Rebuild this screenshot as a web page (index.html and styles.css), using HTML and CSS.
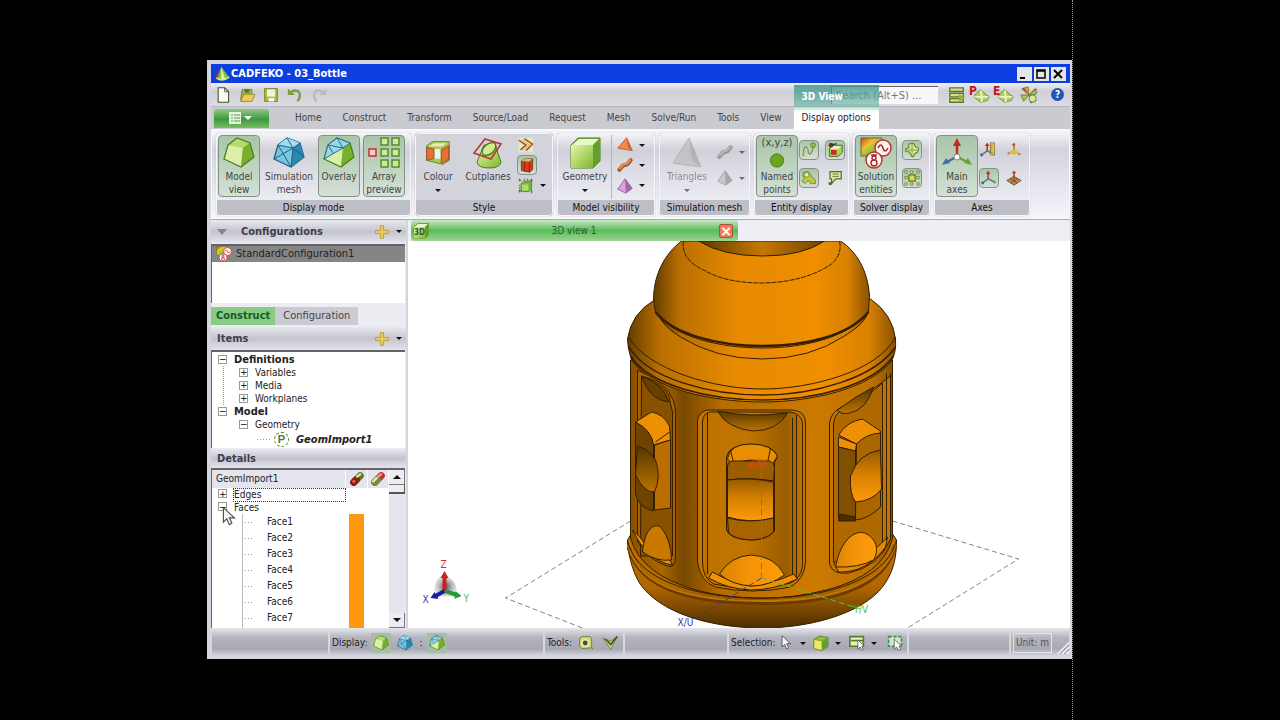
FILE: index.html
```
<!DOCTYPE html>
<html lang="en">
<head>
<meta charset="utf-8">
<title>CADFEKO - 03_Bottle</title>
<link rel="stylesheet" href="styles.css">
</head>
<body>
<svg class="defs" aria-hidden="true">
  <defs>
    <linearGradient id="gGreen" x1="0" y1="0" x2="1" y2="1"><stop offset="0" stop-color="#e4f5a8"/><stop offset="1" stop-color="#7fb82c"/></linearGradient>
    <linearGradient id="gHeat" x1="0" y1="0" x2="1" y2="1"><stop offset="0" stop-color="#d8401c"/><stop offset=".35" stop-color="#eec22e"/><stop offset=".65" stop-color="#7cc442"/><stop offset="1" stop-color="#2a9b9b"/></linearGradient>
  </defs>
  <symbol id="logo" viewBox="0 0 20 20"><path d="M9 1 1 14 6 18Z" fill="#a3304a"/><path d="M9 1 4 16Q12 20 19 14Z" fill="#76c043"/><path d="M9 1 9 17Q12 18 14 16Z" fill="#d9f2b0"/><path d="M3 15Q11 20 19 14" fill="none" stroke="#e9e36a" stroke-width="2"/></symbol>
  <symbol id="solid" viewBox="0 0 32 32"><path d="M5 8 14 1 27 6 31 20 18 30 1 22Z" fill="#8cc63c"/><path d="M5 8 14 1 27 6 20 11Z" fill="#b5dc66"/><path d="M5 8 20 11 18 30 1 22Z" fill="#dcefa8"/><path d="M20 11 27 6 31 20 18 30Z" fill="#76b02c"/><path d="M5 8 14 1 27 6 31 20 18 30 1 22Z" fill="none" stroke="#4b7d25" stroke-width="1.3"/></symbol>
  <symbol id="mesh" viewBox="0 0 32 32"><path d="M5 8 14 1 27 6 31 20 18 30 1 22Z" fill="#7cc6e0" stroke="#1c6080" stroke-width="1.3"/><path d="M5 8 14 1 27 6 20 11Z" fill="#a6dcee"/><path d="M20 11 27 6 31 20 18 30Z" fill="#2b88b0"/><path d="M5 8 20 11 27 6M20 11 18 30M1 22 20 11 31 20M5 8 18 30M14 1 20 11" fill="none" stroke="#1a6384"/></symbol>
  <symbol id="overlay" viewBox="0 0 32 32"><use href="#solid"/><path d="M5 8 14 1 27 6 20 11 1 22Z" fill="#9bd6ea" stroke="#23708e"/><path d="M5 8 20 11M14 1 20 11M5 8 10 16" fill="none" stroke="#23708e"/></symbol>
  <symbol id="array" viewBox="0 0 32 32"><g fill="#cbea9d" stroke="#568d28" stroke-width="1.5"><path d="M13 1h7v7h-7zM24 1h7v7h-7zM13 12h7v7h-7zM24 12h7v7h-7zM13 23h7v7h-7zM24 23h7v7h-7z"/><path d="M1 12h7v7H1z" fill="#f6cfc8" stroke="#c92c2c"/></g></symbol>
  <symbol id="colour" viewBox="0 0 32 32"><path d="M2 7 9 2H30V25L22 30 2 25Z" fill="#a3cd50" stroke="#58772a"/><path d="M5 8 11 4H27L21 8Z" fill="#f3e2bb"/><path d="M2 9 11 11V23L2 25ZM20 12 29 7V24L20 29Z" fill="#e66f35" stroke="#9d4824"/><path d="M12 11h7v12h-7z" fill="#eef0f3"/></symbol>
  <symbol id="cut" viewBox="0 0 32 32"><path d="M12 8 5 25Q6 31 17 31T29 25L23 8Z" fill="url(#gGreen)" stroke="#477c22"/><ellipse cx="17" cy="12" rx="8" ry="5" transform="rotate(-40 17 12)" fill="#d4eb8e" stroke="#477c22" stroke-width="1.5"/><path d="M13 2 29 7 19 22 2 16Z" fill="none" stroke="#bf3434" stroke-width="1.6"/></symbol>
  <symbol id="cube" viewBox="0 0 32 32"><path d="M2 8 9 1H31V24L24 31H2Z" fill="#88be43" stroke="#477b20"/><path d="M3 8 10 2H30L24 8Z" fill="#e4f8c9"/><path d="M2 8H24V31H2Z" fill="url(#gGreen)"/><path d="M24 8 31 1V24L24 31Z" fill="#659e2d"/></symbol>
  <symbol id="selcube" viewBox="0 0 32 32"><path d="M2 9 13 2 30 5V23L18 31 2 27Z" fill="#8fc03c" stroke="#4e7420" stroke-width="1.5"/><path d="M2 9 18 12V31L2 27Z" fill="#ecea62" stroke="#6c7a20"/><path d="M18 12 30 5V23L18 31Z" fill="#659e2d"/></symbol>
  <symbol id="fold" viewBox="0 0 20 20"><path d="M1 1H19V19H1Z" fill="#e1edb7"/><path d="M1 4 10 10 3 16M8 2 18 9 10 17" fill="none" stroke="#b8482f" stroke-width="2"/><path d="M5 3 14 10 6 17" fill="none" stroke="#d3a141"/></symbol>
  <symbol id="redcube" viewBox="0 0 20 20"><path d="M3 5 7 2H17V16L13 19 3 17Z" fill="#d83c20" stroke="#67321b"/><path d="M3 5 7 2H17L13 6Z" fill="#b1c56b"/><path d="M7 5V18M13 6V19" stroke="#731d16"/></symbol>
  <symbol id="box" viewBox="0 0 20 20"><path d="M4 7 7 4H17V14L14 17H4Z" fill="#79b33d" stroke="#477b20"/><path d="M1 3H4M2 1V4M17 1V4M18 3H15M1 16H4M2 14V18M17 15V19M8 1V3M12 1V3M1 9H3M1 12H3" stroke="#47772e" stroke-width="1.4"/><path d="M5 8H13V16H5Z" fill="#b4db6a"/></symbol>
  <symbol id="tri" viewBox="0 0 20 20"><path d="M12 1 1 14 19 17Z" fill="#f28c43" stroke="#a75223"/><path d="M12 1 14 13 19 17Z" fill="#c96429"/></symbol>
  <symbol id="wire" viewBox="0 0 20 20"><path d="M3 16 7 11 13 9 17 4" fill="none" stroke="#a5592c" stroke-width="5" stroke-linecap="round"/><path d="M3 15 7 10 13 8 17 3" fill="none" stroke="#eda068" stroke-width="2"/></symbol>
  <symbol id="tetra" viewBox="0 0 20 20"><path d="M10 1 1 14 11 19 19 13Z" fill="#d9a5d8" stroke="#89558e"/><path d="M10 1 11 19 19 13Z" fill="#a566ab"/></symbol>
  <symbol id="points" viewBox="0 0 32 18"><circle cx="16" cy="9" r="7" fill="#6ba71e" stroke="#477818"/></symbol>
  <symbol id="curve" viewBox="0 0 20 20"><path d="M3 16C3 1 9 6 9 12S15 15 15 4" fill="none" stroke="#6f933c" stroke-width="1.5"/><circle cx="3" cy="16" r="2" fill="#a5b64a"/><circle cx="15" cy="4" r="3" fill="#a5b64a" stroke="#597234"/></symbol>
  <symbol id="port" viewBox="0 0 20 20"><path d="M3 8 8 4H19V13L14 18H3Z" fill="#a8d44d" stroke="#345222"/><path d="M4 9 8 5H18L14 9Z" fill="#e6f5c0"/><path d="M5 10h7v6H5Z" fill="#d12727"/><circle cx="5" cy="4" r="3" fill="#743821"/><path d="M5 4 12 2" stroke="#333" stroke-width="1.5"/></symbol>
  <symbol id="snap" viewBox="0 0 20 20"><path d="M2 4 5 2H15L17 5V16L5 17 2 14Z" fill="#c9db78" stroke="#5c7a2b"/><circle cx="9" cy="10" r="4" fill="#5a4726" stroke="#e8ecb0" stroke-width="2"/><circle cx="18" cy="17" r="1" fill="#7a8c2e"/></symbol>
  <symbol id="shape" viewBox="0 0 20 20"><path d="M3 3Q9 0 12 5L13 9Q19 10 18 17H12L9 13 5 17 1 14 5 9 2 8Z" fill="#c1c744" stroke="#67842a"/><circle cx="7" cy="6" r="3" fill="#e8ecae" stroke="#67842a"/></symbol>
  <symbol id="note" viewBox="0 0 20 20"><path d="M5 2H19V11H12L7 17V11H5Z" fill="#ddecaa" stroke="#526e22" stroke-width="1.5"/><path d="M8 5H16M8 8H16" stroke="#526e22"/><circle cx="5" cy="17" r="2" fill="#526e22"/></symbol>
  <symbol id="solution" viewBox="0 0 32 32"><path d="M1 1H22V19H1Z" fill="url(#gHeat)" stroke="#5c682c"/><circle cx="23" cy="11" r="8" fill="#fff6f2" stroke="#bb3434" stroke-width="1.5"/><path d="M18 11Q21 5 23 11T28 11" fill="none" stroke="#b12121" stroke-width="1.6"/><circle cx="14" cy="23" r="8" fill="#fff6f2" stroke="#bb3434" stroke-width="1.5"/><path d="M11 18H17M12 21a2 2 0 1 0 4 0 2 2 0 1 0-4 0M11 26a3 3 0 1 0 6 0 3 3 0 1 0-6 0" fill="none" stroke="#b12121" stroke-width="1.4"/></symbol>
  <symbol id="clover" viewBox="0 0 20 20"><path d="M6 3Q10 0 13 3L14 6Q19 6 18 10T14 14L12 18Q9 19 8 15L6 12Q1 13 2 9L6 7Z" fill="#dae9a2" stroke="#6b8f2e" stroke-width="1.5"/><path d="M2 10H17M10 2V18" stroke="#6b8f2e"/></symbol>
  <symbol id="gridic" viewBox="0 0 20 20"><path d="M6 6h8v8H6z" fill="#d8d558" stroke="#5f772a" stroke-width="1.5"/><path d="M1 1h3v3H1zM8 1h3v3H8zM16 1h3v3h-3zM1 8h3v3H1zM16 8h3v3h-3zM1 16h3v3H1zM8 16h3v3H8zM16 16h3v3h-3z" fill="#edf5b7" stroke="#5f772a"/></symbol>
  <symbol id="axes" viewBox="0 0 32 32"><path d="M16 20V8" stroke="#c92525" stroke-width="2.5"/><path d="M12 9 16 1 20 9Z" fill="#c92525"/><path d="M15 20 6 25" stroke="#446da9" stroke-width="2.5"/><path d="M1 28 5 21 9 26Z" fill="#446da9"/><path d="M17 20 26 25" stroke="#68a33a" stroke-width="2.5"/><path d="M31 28 27 21 23 26Z" fill="#68a33a"/><circle cx="16" cy="20" r="3" fill="#fff" stroke="#888"/></symbol>
  <symbol id="miniaxes" viewBox="0 0 20 20"><path d="M9 12V2" stroke="#c42f2b" stroke-width="2"/><path d="M9 11 2 16M9 11 17 15" stroke="#547a9d" stroke-width="2"/><path d="M6 5 9 1 12 5Z" fill="#c42f2b"/><circle cx="2" cy="16" r="2" fill="#456ea4"/><circle cx="17" cy="15" r="2" fill="#79a546"/></symbol>
  <symbol id="ruler" viewBox="0 0 20 20"><use href="#miniaxes"/><path d="M13 1h5v15h-5z" fill="#e5d06a" stroke="#826e25"/><path d="M13 4h3M13 7h3M13 10h3M13 13h3" stroke="#826e25"/></symbol>
  <symbol id="origin" viewBox="0 0 20 20"><path d="M10 12V2M10 11 2 15M10 11 18 16" stroke="#b87b26" stroke-width="2"/><path d="M4 14 10 9 17 14 10 16Z" fill="#e0bd44"/><path d="M7 4 10 1 12 4Z" fill="#b63b29"/></symbol>
  <symbol id="plane" viewBox="0 0 20 20"><path d="M1 13 10 8 19 13 10 19Z" fill="#b99047" stroke="#634522"/><path d="M5 11 14 16M15 11 6 16" stroke="#634522"/><path d="M10 12V2" stroke="#b63b29" stroke-width="2"/><path d="M7 4 10 1 13 4Z" fill="#b63b29"/></symbol>
  <symbol id="meshTri" viewBox="0 0 32 32"><path d="M18 1 2 26 30 30Z" fill="#b5b6ba" stroke="#929397"/><path d="M18 1 21 24 30 30Z" fill="#999a9f"/></symbol>
  <symbol id="plus" viewBox="0 0 20 20"><path d="M8 2h4v6h6v4h-6v6H8v-6H2V8h6Z" fill="#e9ca5d" stroke="#b89533"/></symbol>
  <symbol id="cursor" viewBox="0 0 20 24"><path d="M4 1V18L8 14 11 21 14 19 11 13H17Z" fill="#f7f7f7" stroke="#4b4b4b" stroke-width="1.3"/></symbol>
  <symbol id="new" viewBox="0 0 20 20"><path d="M4 1H12L17 6V19H4Z" fill="#fbfcf8" stroke="#3e502c" stroke-width="1.3"/><path d="M12 1V6H17" fill="none" stroke="#3e502c"/></symbol>
  <symbol id="open" viewBox="0 0 20 20"><path d="M4 3H16V16H2Z" fill="#99b94a" stroke="#67781e"/><path d="M2 18 6 9H20L16 18Z" fill="#efcb55" stroke="#8e7a2f"/><path d="M7 3H13V7H7Z" fill="#4c7a2d"/></symbol>
  <symbol id="save" viewBox="0 0 20 20"><path d="M2 2H18V18H2Z" fill="#a9be46" stroke="#64781f"/><path d="M5 3H15V12H5Z" fill="#f0f3dd"/><path d="M7 14H14V18H7Z" fill="#fff"/></symbol>
  <symbol id="undo" viewBox="0 0 20 20"><path d="M5 6C16 1 19 10 13 18" fill="none" stroke="currentColor" stroke-width="3"/><path d="M1 2V10H10Z" fill="currentColor"/></symbol>
  <symbol id="runmesh" viewBox="0 0 20 20"><path d="M9 4 19 12 17 16 10 18 3 13 3 10Z" fill="#a9d160" stroke="#6a8c34"/><path d="M3 12H18M10 5 11 18" stroke="#eaf6cc" stroke-width="2"/></symbol>
  <symbol id="fan" viewBox="0 0 20 20"><path d="M10 10 2 3 9 1ZM10 10 18 3 18 9ZM10 10 1 10 4 17ZM10 10 12 19 18 16Z" fill="#a7c64c" stroke="#657d2e"/><path d="M10 10 2 3 5 2ZM10 10 18 3 16 3Z" fill="#c4452e"/><circle cx="14" cy="14" r="4" fill="#dae9a2" stroke="#657d2e"/></symbol>
  <symbol id="machine" viewBox="0 0 20 20"><path d="M2 2H17V6H2ZM2 8H17V12H2ZM2 14H17V18H2Z" fill="#d8dd94" stroke="#5b7727" stroke-width="1.5"/><path d="M12 9 19 13 12 18Z" fill="#8cb539"/></symbol>
  <symbol id="pillA" viewBox="0 0 20 20"><path d="M6 14 14 6" stroke="#5d7a26" stroke-width="9" stroke-linecap="round"/><path d="M6 14 9 11" stroke="#8e1d18" stroke-width="9" stroke-linecap="round"/><path d="M10 7 14 4" stroke="#d5e59c" stroke-width="3" stroke-linecap="round"/><circle cx="6" cy="13" r="2" fill="#dd5b4c"/></symbol>
  <symbol id="pillB" viewBox="0 0 20 20"><path d="M6 14 14 6" stroke="#b8342e" stroke-width="9" stroke-linecap="round"/><path d="M6 14 9 11" stroke="#7a8d3c" stroke-width="9" stroke-linecap="round"/><path d="M10 7 14 4" stroke="#f3938a" stroke-width="3" stroke-linecap="round"/><path d="M4 13 8 9" stroke="#e4eab9" stroke-width="3" stroke-linecap="round"/></symbol>
  <symbol id="selwin" viewBox="0 0 20 20"><path d="M1 2H18V14H1Z" fill="#e6efbc" stroke="#557d28" stroke-width="2"/><path d="M2 7H18" stroke="#557d28" stroke-width="2"/><path d="M11 6V18L14 15 16 19 18 18 16 14H19Z" fill="#fff" stroke="#555"/></symbol>
  <symbol id="selbox" viewBox="0 0 20 20"><path d="M2 2H18V14H2Z" fill="#cfe8cc" stroke="#3c8a52" stroke-width="2" stroke-dasharray="4 2"/><path d="M9 5V18L12 15 14 19 17 18 15 14H18Z" fill="#fff" stroke="#555"/></symbol>
</svg>
<main class="desktop">
<div class="app">
  <header class="titlebar">
    <svg class="i16"><use href="#logo"/></svg><h1>CADFEKO - 03_Bottle</h1>
    <div class="wins"><button aria-label="Minimise"><svg viewBox="0 0 12 12"><path d="M2 10H7" stroke="#000" stroke-width="2"/></svg></button><button aria-label="Maximise"><svg viewBox="0 0 12 12"><path d="M2 2H10V10H2ZM2 3H10" fill="none" stroke="#000" stroke-width="1.5"/></svg></button><button aria-label="Close"><svg viewBox="0 0 12 12"><path d="M2 2 10 10M10 2 2 10" stroke="#000" stroke-width="2"/></svg></button></div>
  </header>
  <div class="quick">
    <button aria-label="New"><svg class="i16"><use href="#new"/></svg></button><button aria-label="Open"><svg class="i16"><use href="#open"/></svg></button><button aria-label="Save"><svg class="i16"><use href="#save"/></svg></button><button class="undo" aria-label="Undo"><svg class="i16"><use href="#undo"/></svg></button><button class="redo" aria-label="Redo"><svg class="i16"><use href="#undo"/></svg></button>
    <input class="search" type="search" aria-label="Search" placeholder="Search (Alt+S) ...">
    <div class="launch"><button aria-label="Components"><svg class="i18"><use href="#machine"/></svg></button><button class="letter" aria-label="Run preprocessor"><svg class="i18"><use href="#runmesh"/></svg><b>P</b></button><button class="letter" aria-label="Run editor"><svg class="i18"><use href="#runmesh"/></svg><b>E</b></button><button aria-label="Run solver"><svg class="i18"><use href="#fan"/></svg></button><button class="help" aria-label="Help">?</button></div>
  </div>
  <nav class="tabs">
    <button class="filemenu" aria-label="File"><svg viewBox="0 0 28 14"><path d="M1 1H13V13H1Z" fill="#e9f5df"/><path d="M3 4H5M6 4H12M3 7H5M6 7H12M3 10H5M6 10H12" stroke="#4c9a46"/><path d="M16 5H24L20 9Z" fill="#fff"/></svg></button>
    <button>Home</button><button>Construct</button><button>Transform</button><button>Source/Load</button><button>Request</button><button>Mesh</button><button>Solve/Run</button><button>Tools</button><button>View</button>
    <div class="context"><span>3D View</span><button class="chosen">Display options</button></div>
  </nav>
  <div class="ribbon">
    <section class="group g-display"><div class="cmds"><button class="big on"><svg class="i32"><use href="#solid"/></svg>Model<br>view</button><button class="big wide"><svg class="i32"><use href="#mesh"/></svg>Simulation<br>mesh</button><button class="big on"><svg class="i32"><use href="#overlay"/></svg>Overlay</button><button class="big on"><svg class="i32"><use href="#array"/></svg>Array<br>preview</button></div><h2>Display mode</h2></section>
    <section class="group g-style"><div class="cmds"><button class="big"><svg class="i26"><use href="#colour"/></svg>Colour<i class="arr"></i></button><button class="big wide"><svg class="i32"><use href="#cut"/></svg>Cutplanes</button><div class="small one"><button aria-label="Fold"><svg class="i16"><use href="#fold"/></svg></button><button class="on" aria-label="Opaque"><svg class="i16"><use href="#redcube"/></svg></button><button class="drop" aria-label="Bounds"><svg class="i16"><use href="#box"/></svg><i class="arr"></i></button></div></div><h2>Style</h2></section>
    <section class="group g-model"><div class="cmds"><button class="big wide"><svg class="i32"><use href="#cube"/></svg>Geometry<i class="arr"></i></button><div class="small one sep"><button class="drop" aria-label="Faces"><svg class="i16"><use href="#tri"/></svg><i class="arr"></i></button><button class="drop" aria-label="Wires"><svg class="i16"><use href="#wire"/></svg><i class="arr"></i></button><button class="drop" aria-label="Regions"><svg class="i16"><use href="#tetra"/></svg><i class="arr"></i></button></div></div><h2>Model visibility</h2></section>
    <section class="group g-sim"><div class="cmds dim"><button class="big wide" disabled><svg class="i32"><use href="#meshTri"/></svg>Triangles<i class="arr"></i></button><div class="small one two-high"><button class="drop" disabled aria-label="Segments"><svg class="i16"><use href="#wire"/></svg><i class="arr"></i></button><button class="drop" disabled aria-label="Tetrahedra"><svg class="i16"><use href="#tetra"/></svg><i class="arr"></i></button></div></div><h2>Simulation mesh</h2></section>
    <section class="group g-entity"><div class="cmds"><button class="big on"><span class="xyz">(x,y,z)</span><svg class="dot"><use href="#points"/></svg>Named<br>points</button><div class="small grid"><button class="on" aria-label="Curves"><svg class="i16"><use href="#curve"/></svg></button><button class="on" aria-label="Ports"><svg class="i16"><use href="#port"/></svg></button><button class="on" aria-label="Surfaces"><svg class="i16"><use href="#shape"/></svg></button><button aria-label="Notes"><svg class="i16"><use href="#note"/></svg></button></div></div><h2>Entity display</h2></section>
    <section class="group g-solver"><div class="cmds"><button class="big on"><svg class="i32"><use href="#solution"/></svg>Solution<br>entities</button><div class="small grid col"><button class="on" aria-label="Symmetry"><svg class="i16"><use href="#clover"/></svg></button><button class="on" aria-label="Arrays"><svg class="i16"><use href="#gridic"/></svg></button></div></div><h2>Solver display</h2></section>
    <section class="group g-axes"><div class="cmds"><button class="big on"><svg class="i32"><use href="#axes"/></svg>Main<br>axes</button><div class="small grid"><button aria-label="Tick marks"><svg class="i16"><use href="#ruler"/></svg></button><button aria-label="Origin"><svg class="i16"><use href="#origin"/></svg></button><button class="on" aria-label="Mini axes"><svg class="i16"><use href="#miniaxes"/></svg></button><button aria-label="Workplane"><svg class="i16"><use href="#plane"/></svg></button></div></div><h2>Axes</h2></section>
  </div>
  <div class="work">
    <aside>
      <div class="head conf"><i class="fold"></i><h2>Configurations</h2><button class="drop" aria-label="Add configuration"><svg class="i16"><use href="#plus"/></svg><i class="arr"></i></button></div>
      <ul class="configs"><li><svg class="i16"><use href="#solution"/></svg>StandardConfiguration1</li></ul>
      <div class="sidetabs"><button class="active">Construct</button><button>Configuration</button></div>
      <div class="head"><h2>Items</h2><button class="drop" aria-label="Add item"><svg class="i16"><use href="#plus"/></svg><i class="arr"></i></button></div>
      <ul class="tree">
        <li><button class="tw" aria-label="Collapse">−</button><b>Definitions</b>
          <ul><li><button class="tw" aria-label="Expand">+</button>Variables</li><li><button class="tw" aria-label="Expand">+</button>Media</li><li><button class="tw" aria-label="Expand">+</button>Workplanes</li></ul></li>
        <li><button class="tw" aria-label="Collapse">−</button><b>Model</b>
          <ul class="last"><li><button class="tw" aria-label="Collapse">−</button>Geometry<div class="leaf"><span class="pbadge">P</span><b><em>GeomImport1</em></b></div></li></ul></li>
      </ul>
      <div class="head details"><h2>Details</h2></div>
      <div class="detailbox">
        <table>
          <thead><tr><th>GeomImport1</th><th><svg class="i16"><use href="#pillA"/></svg></th><th><svg class="i16"><use href="#pillB"/></svg></th></tr></thead>
          <tbody>
            <tr class="top"><td><button class="tw" aria-label="Expand">+</button><span class="focus">Edges</span></td><td></td><td></td></tr>
            <tr class="top"><td><button class="tw" aria-label="Collapse">−</button><span>Faces</span></td><td></td><td></td></tr>
            <tr><td>Face1</td><td class="swatch"></td><td></td></tr><tr><td>Face2</td><td class="swatch"></td><td></td></tr><tr><td>Face3</td><td class="swatch"></td><td></td></tr><tr><td>Face4</td><td class="swatch"></td><td></td></tr><tr><td>Face5</td><td class="swatch"></td><td></td></tr><tr><td>Face6</td><td class="swatch"></td><td></td></tr><tr><td>Face7</td><td class="swatch"></td><td></td></tr><tr><td>Face8</td><td class="swatch"></td><td></td></tr>
          </tbody>
        </table>
        <div class="scroll"><button aria-label="Scroll up"><i class="arr up"></i></button><span class="thumb"></span><button class="dn" aria-label="Scroll down"><i class="arr"></i></button></div>
        <svg class="pointer"><use href="#cursor"/></svg>
      </div>
    </aside>
    <section class="view">
      <div class="viewtabs"><div class="viewtab"><span class="cubeicon"><svg class="i16"><use href="#cube"/></svg><b>3D</b></span><span class="name">3D view 1</span><button aria-label="Close view">×</button></div></div>
      <svg class="scene" viewBox="409 241 661 387" role="img" aria-label="3D model of a bottle">
        <defs>
          <linearGradient id="body"><stop offset="0" stop-color="#8a5200"/><stop offset=".12" stop-color="#a86500"/><stop offset=".2" stop-color="#784800"/><stop offset=".35" stop-color="#b66c00"/><stop offset=".7" stop-color="#cc7a00"/><stop offset=".92" stop-color="#bd7100"/><stop offset="1" stop-color="#895100"/></linearGradient>
          <linearGradient id="dome"><stop offset="0" stop-color="#633d00"/><stop offset=".12" stop-color="#b96f00"/><stop offset=".4" stop-color="#e88b00"/><stop offset=".75" stop-color="#ef8e00"/><stop offset=".9" stop-color="#d98100"/><stop offset="1" stop-color="#8a5200"/></linearGradient>
          <linearGradient id="low" x1="0" y1="0" x2="0" y2="1"><stop offset="0" stop-color="#c47500"/><stop offset=".6" stop-color="#b06700"/><stop offset="1" stop-color="#4c2d00"/></linearGradient>
          <linearGradient id="shade" x1="0" y1="0" x2="0" y2="1"><stop offset="0" stop-color="#533600"/><stop offset="1" stop-color="#bd7300"/></linearGradient>
          <linearGradient id="neck"><stop offset="0" stop-color="#5a3800"/><stop offset=".5" stop-color="#c77700"/><stop offset="1" stop-color="#6e4400"/></linearGradient>
          <linearGradient id="cup" x1="0" y1="0" x2="0" y2="1"><stop offset="0" stop-color="#955900"/><stop offset=".45" stop-color="#d48000"/><stop offset="1" stop-color="#ff9a0c"/></linearGradient>
          <linearGradient id="recess"><stop offset="0" stop-color="#bd7200"/><stop offset=".45" stop-color="#c17400"/><stop offset=".84" stop-color="#9b5c00"/><stop offset="1" stop-color="#c27500"/></linearGradient>
          <linearGradient id="ball"><stop offset="0" stop-color="#dc8300"/><stop offset=".45" stop-color="#f39407"/><stop offset="1" stop-color="#ff9b0a"/></linearGradient>
          <radialGradient id="fog"><stop offset="0" stop-color="#555"/><stop offset="1" stop-color="#d3d3d3" stop-opacity=".6"/></radialGradient>
        </defs>
        <path d="M631 521 506 598 583 628M893 521 1019 559 908 628" fill="none" stroke="#848484" stroke-dasharray="5 3"/>
        <g stroke="#341e00" stroke-width="1" stroke-linejoin="round">
          <path d="M628 540C628 550 632 570 640 583C660 613 711 628 763 628S870 611 887 581C895 568 897 555 897 540L887 525H637Z" fill="url(#low)"/>
          <path d="M631 360V538Q641 575 700 591Q763 606 827 590Q884 575 893 538V360Z" fill="url(#body)"/>
          <path d="M629 547C641 594 705 603 763 603S884 592 896 545" fill="none" stroke="#6b3b00" stroke-width="4"/>
          <path d="M629 546C641 593 705 601 763 601S884 590 896 544" fill="none" stroke="#c27600" stroke-width="2"/>
          <path d="M628 541C637 580 695 598 763 598S888 578 897 540" fill="none"/>
          <path d="M655 300Q632 313 628 339Q628 348 632 360C652 389 713 402 763 402S871 388 892 361Q897 352 896 339Q893 314 871 299Z" fill="url(#dome)"/>
          <path d="M629 346C647 379 711 395 763 395S875 378 896 347M631 356C650 386 711 400 763 400S873 386 894 356" fill="none" stroke-width="1.5"/>
          <path d="M629 337C649 370 714 389 763 389S879 371 896 337" fill="none"/>
          <path d="M657 310Q660 324 681 337Q716 359 763 359T845 336Q867 323 869 310" fill="url(#dome)"/>
          <path d="M682 241C665 254 654 275 654 300L656 312C674 337 720 348 763 348S849 337 869 312L870 295C868 271 858 252 841 241Z" fill="url(#dome)"/>
          <path d="M656 312C674 335 720 346 763 346S849 336 869 312" fill="none" stroke-width="2.5"/>
          <path d="M699 241Q723 256 763 256T825 241Z" fill="url(#neck)"/>
          <path d="M684 241Q681 260 706 271Q727 283 763 283Q806 282 832 264Q843 254 840 241" fill="none" stroke-dasharray="5 1"/>
          <path d="M638 370C653 377 667 385 672 397Q677 405 676 422V555Q676 569 668 566C653 561 644 552 638 541Z" fill="#a66300"/>
          <path d="M642 376Q660 380 669 395L673 412V556H641Z" fill="#885100"/>
          <path d="M642 376Q650 400 669 402 664 384 642 376Z" fill="#674000"/>
          <path d="M636 422 652 412Q664 414 670 426L671 440 654 445Q652 432 636 422Z" fill="#ed9003"/>
          <path d="M655 445 671 440V508L655 510Z" fill="#ba6e00"/>
          <path d="M656 442 670 432" fill="none"/>
          <path d="M636 422Q652 430 654 445V511Q638 507 636 493Z" fill="#6f4300"/>
          <path d="M638 446Q649 449 656 460Q662 477 655 492Q645 493 636 475Z" fill="url(#shade)"/>
          <path d="M633 530Q648 561 673 565L669 558Q652 556 641 538Z" fill="#f09409"/>
          <path d="M643 552C645 528 655 523 661 527C669 536 672 550 672 560Q657 562 643 552Z" fill="#c77900"/>
          <path d="M698 562V421Q699 411 709 410H793Q806 411 806 423V562Q805 579 791 587Q754 595 716 587Q701 582 698 562Z" fill="#c37500"/>
          <path d="M703 562V421Q704 413 711 412H791Q802 414 803 423V565Q802 578 791 583Q753 593 714 584Q703 578 703 562Z" fill="url(#recess)"/>
          <path d="M708 413V574M793 418V577M797 415V580" fill="none"/>
          <path d="M718 411Q750 418 788 413Q778 431 753 431Q727 428 718 411Z" fill="url(#shade)"/>
          <path d="M727 457Q729 445 751 444Q774 445 778 456L775 463V531Q768 540 751 540Q730 539 727 530Z" fill="#9e5e00"/>
          <path d="M728 459Q730 444 751 444T778 456L773 464 751 460 732 463Z" fill="#e98e00"/>
          <path d="M731 450 734 463M771 448 768 463" fill="none"/>
          <path d="M728 466Q729 461 735 461H770Q775 463 775 468L774 481Q751 477 728 480Z" fill="#9b5d00"/>
          <path d="M728 480Q751 477 774 482V518Q751 524 728 517Z" fill="url(#cup)"/>
          <path d="M728 518Q751 524 774 518V532Q766 540 751 540Q733 539 729 532Z" fill="#a66300"/>
          <path d="M709 578 713 572Q732 583 751 586 772 584 794 574L798 579Q775 590 751 590 728 589 709 578Z" fill="#ed9207"/>
          <path d="M720 574Q731 556 752 555Q775 556 785 575Q770 586 752 586Q732 585 720 574Z" fill="url(#ball)"/>
          <path d="M887 379Q864 397 844 406Q831 412 830 423V564Q833 575 849 573Q879 567 891 539V376Z" fill="#c27400"/>
          <path d="M883 383Q863 401 844 409Q835 413 834 424V560Q836 570 849 570Q872 564 883 545Z" fill="#b06900"/>
          <path d="M838 410Q855 397 874 387Q867 410 850 413 841 415 838 410Z" fill="url(#shade)"/>
          <path d="M839 435Q848 421 863 419L881 431 880 435Q864 438 857 444Z" fill="#ed9003"/>
          <path d="M839 437 857 444 856 451 839 447Z" fill="#ed9003"/>
          <path d="M839 447 856 451V520L839 518Z" fill="#805000"/>
          <path d="M857 444Q866 434 881 433V507Q869 519 856 520Z" fill="#aa6600"/>
          <path d="M881 450Q859 453 851 476Q850 494 856 502Q873 501 882 489Z" fill="url(#cup)"/>
          <path d="M840 514 856 517V521H839Z" fill="#4d2e00"/>
          <path d="M834 562Q863 565 888 537L886 547Q867 573 839 572Z" fill="#e58a00"/>
          <path d="M836 567C841 540 855 530 865 533C877 538 880 550 874 560Q859 568 836 567Z" fill="url(#ball)"/>
          <path d="M887 373V540M891 373V530" fill="none"/>
        </g>
        <g fill="none" stroke-dasharray="6 3"><path d="M762 464V578" stroke="#ef4718"/><path d="M762 578 697 618" stroke="#513078"/><path d="M762 578 861 609" stroke="#52c43b"/></g>
        <g class="axistext"><text x="749" y="467" fill="#e84419">Z/W</text><text x="678" y="626" fill="#3939a2">X/U</text><text x="854" y="613" fill="#45c538">Y/V</text></g>
        <path d="M436 597Q432 576 445 576Q459 579 457 596Z" fill="url(#fog)"/>
        <g stroke-width="4"><path d="M445 591V576" stroke="#c72222"/><path d="M445 591 436 596" stroke="#1c1ca0"/><path d="M446 591 457 595" stroke="#289a33"/></g>
        <path d="M441 578 445 571 449 578Z" fill="#c72222"/><path d="M431 598 435 592 439 599Z" fill="#1c1ca0"/><path d="M462 596 456 591 455 599Z" fill="#289a33"/>
        <g class="axistext"><text x="441" y="568" fill="#c33">Z</text><text x="423" y="603" fill="#33a">X</text><text x="464" y="602" fill="#5b5">Y</text></g>
      </svg>
    </section>
  </div>
  <footer class="status">
    <div class="s-blank"></div>
    <div class="s-display"><span>Display:</span><button class="on" aria-label="Model"><svg class="i16"><use href="#solid"/></svg></button><button aria-label="Mesh"><svg class="i16"><use href="#mesh"/></svg></button><span>:</span><button class="on" aria-label="Overlay"><svg class="i16"><use href="#overlay"/></svg></button></div>
    <div class="s-tools"><span>Tools:</span><button aria-label="Snapshot"><svg class="i16"><use href="#snap"/></svg></button><button aria-label="Measure"><svg class="i16" viewBox="0 0 20 20"><path d="M1 4 11 8 19 2 11 18Z" fill="#cad878" stroke="#617638"/><path d="M4 5 11 12 19 2" fill="none" stroke="#465426" stroke-width="2"/></svg></button></div>
    <div class="s-gap"></div>
    <div class="s-select"><span>Selection:</span><button class="drop" aria-label="Selection tool"><svg class="i16"><use href="#cursor"/></svg><i class="arr"></i></button><button class="drop" aria-label="Selection type"><svg class="i16"><use href="#selcube"/></svg><i class="arr"></i></button><button class="drop" aria-label="Selection method"><svg class="i16"><use href="#selwin"/></svg><i class="arr"></i></button><button aria-label="Box select"><svg class="i16"><use href="#selbox"/></svg></button></div>
    <div class="s-fill"></div>
    <div class="s-unit"><button>Unit: m</button><svg class="grip" viewBox="0 0 16 16"><path d="M2 15 15 2M7 15 15 7M12 15 15 12" stroke="#f4f4f6" stroke-width="2"/><path d="M4 15 15 4M9 15 15 9" stroke="#888"/></svg></div>
  </footer>
</div>
</main>
</body>
</html>
```
FILE: styles.css
```
* { box-sizing: border-box; }
body { margin: 0; background: #000; color: #222; font: 10px/12px "DejaVu Sans Condensed", "DejaVu Sans", sans-serif; }
h1, h2, ul { margin: 0; padding: 0; font-size: inherit; }
ul { list-style: none; }
button { font: inherit; color: inherit; border: 0; background: none; padding: 0; }
svg { display: block; flex: none; }
.defs { position: absolute; width: 0; height: 0; }
.i16 { width: 16px; height: 16px; }
.i18 { width: 18px; height: 18px; }
.i26 { width: 26px; height: 32px; }
.i32 { width: 32px; height: 32px; }
.arr { display: block; flex: none; width: 0; height: 0; border: 3px solid transparent; border-top-color: #111; border-bottom: 0; }
.arr.up { border-top: 0; border-bottom: 3px solid #111; }

.desktop { height: 100vh; padding: 60px 0 61px 207px; margin-right: 207px; border-right: 1px dotted #b27bc4; }
.app { height: 100%; display: flex; flex-direction: column; border: 4px solid #d5d5de; border-right-width: 2px; border-bottom-width: 3px; background: #dedee6; }

.titlebar { display: flex; align-items: center; height: 19px; padding: 0 4px 0 3px; background: #0c3fe2; color: #fff; flex: none; }
.titlebar h1 { font-size: 11px; margin-left: 1px; flex: 1; }
.wins { display: flex; gap: 2px; }
.wins button { width: 15px; height: 14px; padding: 1px; background: #e5e5e5; }
.wins svg { width: 12px; height: 12px; }

.quick { display: flex; align-items: center; gap: 8px; height: 24px; padding: 0 6px 0 4px; background: linear-gradient(#f0f0f6, #cfcfd5 35%, #dcdce2); border-bottom: 1px solid #b9b9c1; flex: none; }
.undo { color: #7e9e44; }
.redo { color: #b9bbc1; }
.redo svg { transform: scaleX(-1); }
.search { width: 107px; height: 18px; margin-left: auto; border: 1px solid #666; border-width: 1px 0 0 1px; background: #f8f8fb; font: inherit; font-size: 11px; padding: 0 4px; }
.search::placeholder { color: #777; opacity: 1; }
.launch { display: flex; align-items: center; gap: 6px; margin-left: 2px; }
.letter { position: relative; }
.letter b { position: absolute; left: -3px; top: -1px; color: #c01823; font-size: 12px; }
.help { width: 13px; height: 13px; margin-left: 7px; border-radius: 50%; background: #2954b5; color: #fff; font-weight: bold; }

.tabs { display: flex; align-items: center; gap: 1px; height: 22px; padding-left: 3px; background: #cacad1; flex: none; color: #444; }
.tabs > button { padding: 0 10px; }
.filemenu { width: 55px; height: 19px; margin-right: 15px; border-radius: 3px 3px 0 0; background: linear-gradient(#8fc884, #3d993d 55%, #79bd67); }
.filemenu svg { width: 28px; height: 14px; margin: 0 auto; }
.context { position: relative; align-self: stretch; margin-left: 1px; }
.context span { position: absolute; left: 0; right: 0; bottom: 100%; height: 22px; padding: 6px 8px; background: linear-gradient(#3c948acc, #6db3a499); color: #fff; font-weight: bold; }
.chosen { height: 22px; padding: 0 8px; background: linear-gradient(#b8dccb, #fff 5px); color: #222; }

.ribbon { display: flex; gap: 4px; padding: 3px 4px; height: 90px; flex: none; background: linear-gradient(#f7f7fb, #d4d4dd 22%, #e4e4ed 60%, #f5f5fa); border: 1px solid #fafafe; }
.group { display: flex; flex-direction: column; flex: none; height: 83px; border: 1px solid #f5f5fa; border-radius: 4px; overflow: hidden; background: linear-gradient(#f2f2f6, #d0d0d8 20%, #dfdfe7 50%, #f2f2f8); box-shadow: 0 0 1px #999; }
.group h2 { height: 15px; line-height: 15px; background: #bebec7; text-align: center; font-weight: normal; color: #111; flex: none; }
.g-display { width: 195px; }
.g-style { width: 138px; background: #d3d3dc; }
.g-model { width: 98px; }
.g-sim { width: 91px; }
.g-entity { width: 95px; }
.g-solver { width: 77px; }
.g-axes { width: 96px; }
.cmds { display: flex; flex: 1; gap: 3px; padding: 1px; min-height: 0; }
.big { display: flex; flex-direction: column; align-items: center; justify-content: flex-start; min-width: 42px; height: 62px; border: 1px solid transparent; border-radius: 4px; color: #444; line-height: 13px; }
.big svg { margin: 1px 0; }
.big.wide { min-width: 52px; }
.big .arr { margin-top: 6px; }
.on { border: 1px solid #829486; border-radius: 4px; background: linear-gradient(#a9c5aa, #c1d6c2 60%, #d5dfd8); }
.xyz { height: 15px; font-size: 11px; }
.big .dot { width: 32px; height: 17px; }
.small { display: flex; flex-direction: column; flex: 1; justify-content: space-around; padding-bottom: 3px; }
.small button { width: 20px; height: 20px; padding: 1px; }
.small .drop, .drop { display: flex; align-items: center; gap: 6px; width: 34px; }
.sep { border-left: 1px solid #b5b5bd; padding-left: 4px; }
.two-high { padding: 4px 0 8px; }
.grid { display: grid; grid-template-columns: 22px 22px; place-content: center; gap: 8px 4px; padding-bottom: 6px; }
.grid.col { grid-template-columns: 22px; }
.grid .on { padding: 0 1px; }
.dim { filter: grayscale(1); opacity: .55; }
.g-entity .cmds, .g-solver .cmds, .g-axes .cmds, .g-model .cmds { gap: 0; }

.work { display: flex; flex: 1; min-height: 0; border-top: 1px solid #aaaab2; }
aside { display: flex; flex-direction: column; flex: none; width: 197px; border-right: 2px solid #d4d4dc; background: #ececf3; }
.head { display: flex; align-items: center; height: 23px; padding: 0 0 0 6px; flex: none; background: linear-gradient(#e8e8ef, #c4c4ce 50%, #e4e4ed); color: #3e3e4c; }
.head h2 { flex: 1; font-size: 11px; }
.head .drop { width: 32px; }
.conf h2 { padding-left: 14px; }
.fold { border: 5px solid transparent; border-top: 6px solid #85858d; border-bottom: 0; }
.configs { height: 59px; margin: 1px 1px 4px 0; background: #fff; border: 2px solid #626267; border-width: 2px 0 0 1px; flex: none; }
.configs li { display: flex; align-items: center; gap: 4px; height: 16px; padding-left: 4px; background: #858585; font-size: 11px; }
.sidetabs { display: flex; height: 20px; flex: none; color: #444; font-size: 11px; }
.sidetabs button { padding: 0 8px; height: 18px; background: #cbcbd3; }
.sidetabs .active { padding: 0 5px; background: #88cb85; color: #175a2b; font-weight: bold; }
.tree { height: 98px; margin: 0 1px 1px 0; padding: 1px 0 0 6px; background: #fff; border: 2px solid #626267; border-width: 2px 0 0 1px; line-height: 13px; flex: none; overflow: hidden; }
.tree ul { margin-left: 5px; padding-left: 15px; border-left: 1px dotted #999; }
.tree .last { border-left-color: transparent; }
.tree > li > b { font-size: 11px; }
.tw { display: inline-block; vertical-align: middle; width: 9px; height: 9px; margin: 0 7px 2px 0; border: 1px solid #999; background: #fff; color: #000; font: 9px/6px "DejaVu Sans", sans-serif; }
.leaf { display: flex; align-items: center; height: 16px; padding-left: 35px; font-size: 11px; background: repeating-linear-gradient(90deg, #999 0 1px, transparent 1px 3px) 18px 8px / 13px 1px no-repeat; }
.pbadge { width: 15px; height: 15px; margin-right: 7px; border: 1px dashed #56792c; border-radius: 50%; color: #56792c; font: bold 11px/13px "Liberation Sans", sans-serif; text-align: center; }
.details { height: 19px; }
.detailbox { display: flex; position: relative; flex: 1; min-height: 0; overflow: hidden; margin-right: 1px; border: 2px solid #626267; border-width: 2px 0 0 1px; background: #fff; }
table { flex: 1; align-self: flex-start; border-collapse: collapse; table-layout: fixed; width: 100px; font-size: 10px; }
th, td { padding: 0; height: 16px; text-align: left; }
th { height: 18px; font-weight: normal; background: #e4e4ec; border-right: 1px solid #fff; }
th svg { margin: auto; }
th:first-child { padding-left: 4px; }
th:nth-child(2) { width: 22px; }
th:nth-child(3) { width: 21px; }
td:first-child { padding-left: 55px; background: repeating-linear-gradient(90deg, #999 0 1px, transparent 1px 3px) 30px 8px / 10px 1px no-repeat, linear-gradient(#bbb, #bbb) 30px 0 / 1px 16px no-repeat; }
.top td { height: 13px; line-height: 12px; }
.top td:first-child { padding-left: 6px; background: none; white-space: nowrap; }
.top .focus { display: inline-block; width: 111px; outline: 1px dotted #333; }
.swatch { background: linear-gradient(#ff980c, #ff980c) 3px 0 / 15px 100% no-repeat; }
.scroll { display: flex; flex-direction: column; width: 16px; background: #e5e5ed; flex: none; }
.scroll button { display: grid; place-items: center; height: 15px; border: 1px solid #777; border-width: 0 1px 1px 0; background: #ececf2; }
.scroll .arr { border-width: 4px; border-bottom-width: 0; }
.scroll .arr.up { border-top-width: 0; border-bottom-width: 4px; }
.thumb { height: 9px; border: 1px solid #555; border-width: 0 1px 2px 0; background: #eee; }
.scroll .dn { margin-top: auto; }
.pointer { position: absolute; left: 8px; top: 36px; width: 17px; height: 22px; }

.view { display: flex; flex-direction: column; flex: 1; min-width: 0; background: #fff; }
.viewtabs { height: 21px; background: #eeeef5; flex: none; }
.viewtab { display: flex; align-items: center; width: calc(50% - 4px); height: 21px; margin-left: 3px; padding: 0 5px 0 2px; border-radius: 3px; background: linear-gradient(#c9e8c6, #59bc59 50%, #9fd293); color: #285b32; }
.name { flex: 1; text-align: center; }
.cubeicon { position: relative; }
.cubeicon b { position: absolute; left: 0; top: 4px; width: 13px; text-align: center; font-size: 8px; }
.viewtab button { width: 14px; height: 14px; border: 1px solid #a65339; border-radius: 2px; background: #ef795e; color: #fff; font: bold 14px/10px "DejaVu Sans", sans-serif; }
.scene { width: 100%; flex: 1; min-height: 0; }
.axistext { font: 10px "DejaVu Sans Condensed", sans-serif; }

.status { display: flex; height: 28px; flex: none; padding: 3px 0 1px; background: linear-gradient(#e5e5eb, #b4b4be 35%, #a9a9b3 75%, #d6d6df); }
.status > div { display: flex; align-items: center; gap: 4px; padding: 0 2px; border: 1px solid #d7d7df; border-width: 0 1px; }
.status button { height: 20px; padding: 2px; }
.status .drop { width: 34px; padding: 0; gap: 6px; }
.status .on { border: 0; border-radius: 0; background: #a7bca9; }
.s-blank { width: 118px; }
.status .s-display { width: 215px; }
.status .s-tools { width: 80px; }
.s-gap { width: 104px; }
.status .s-select { width: 180px; gap: 2px; }
.s-fill { flex: 1; }
.s-unit { width: 60px; }
.s-unit button { flex: none; border: 1px solid #e6e6ea; color: #555; }
.grip { width: 14px; height: 14px; margin-left: auto; align-self: flex-end; }
```
